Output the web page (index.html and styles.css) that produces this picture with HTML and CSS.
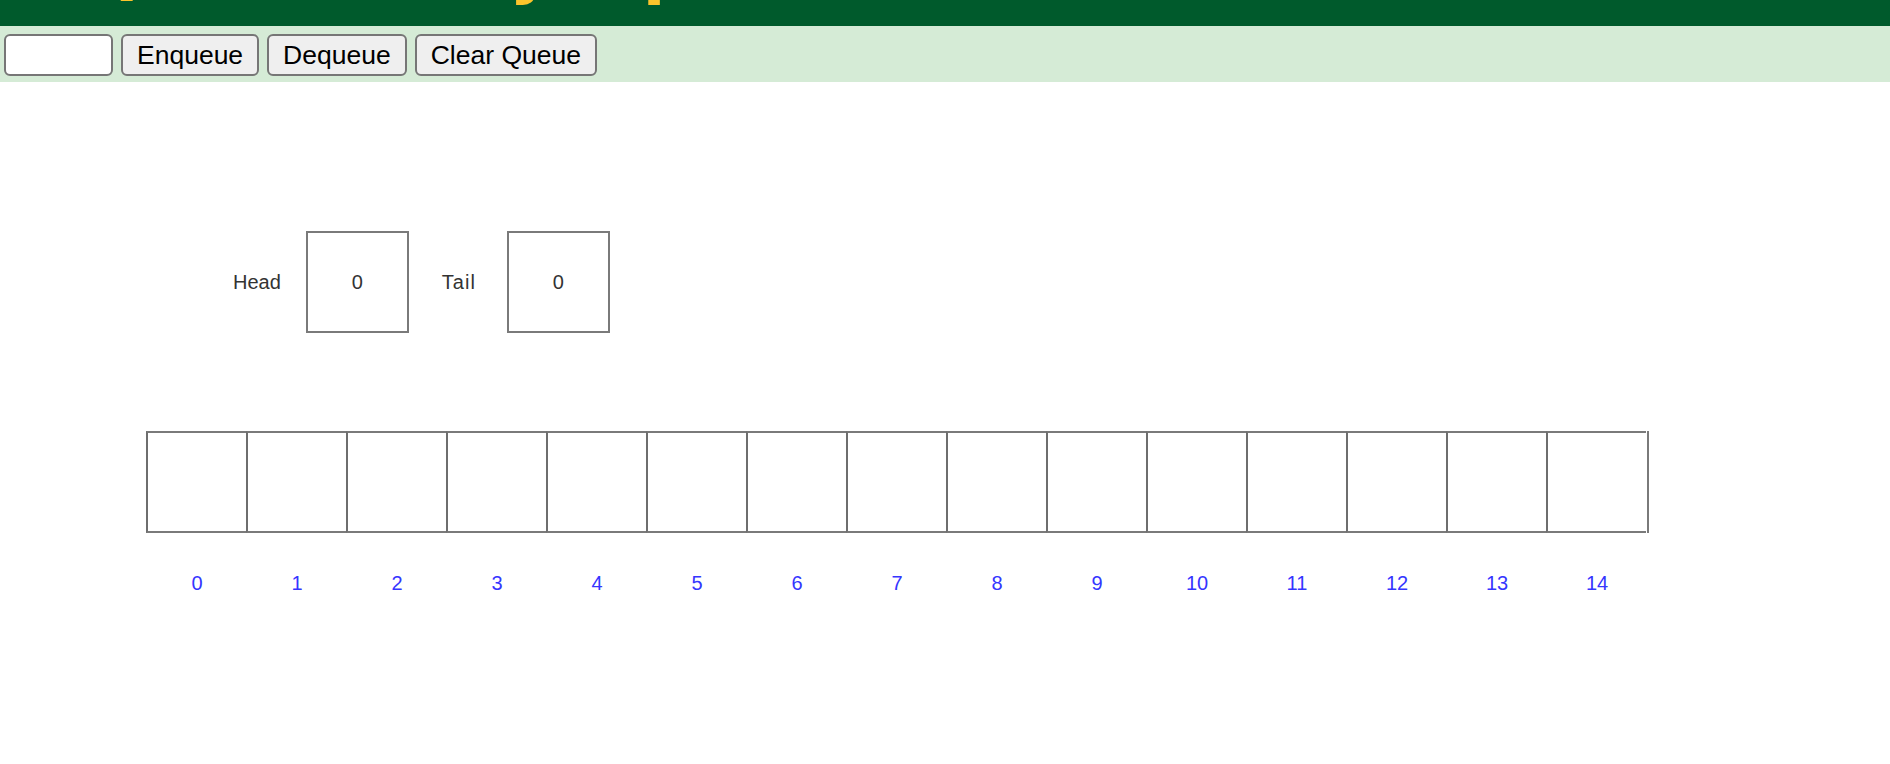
FILE: index.html
```html
<!DOCTYPE html>
<html>
<head>
<meta charset="utf-8">
<title>Queue (Array Implementation)</title>
<link rel="stylesheet" href="styles.css">
</head>
<body>
<header class="header">
  <h1 class="title">Queue (Array Implementation)</h1>
</header>
<div class="controls">
  <input class="field" type="text">
  <button class="btn">Enqueue</button>
  <button class="btn">Dequeue</button>
  <button class="btn">Clear Queue</button>
</div>
<main class="canvas">
  <div class="pointers">
    <span class="plabel head-label">Head</span>
    <div class="pbox">0</div>
    <span class="plabel tail-label">Tail</span>
    <div class="pbox">0</div>
  </div>
  <div class="array">
    <div class="cell"></div><div class="cell"></div><div class="cell"></div><div class="cell"></div><div class="cell"></div>
    <div class="cell"></div><div class="cell"></div><div class="cell"></div><div class="cell"></div><div class="cell"></div>
    <div class="cell"></div><div class="cell"></div><div class="cell"></div><div class="cell"></div><div class="cell"></div>
  </div>
  <div class="indices">
    <span class="idx">0</span><span class="idx">1</span><span class="idx">2</span><span class="idx">3</span><span class="idx">4</span>
    <span class="idx">5</span><span class="idx">6</span><span class="idx">7</span><span class="idx">8</span><span class="idx">9</span>
    <span class="idx">10</span><span class="idx">11</span><span class="idx">12</span><span class="idx">13</span><span class="idx">14</span>
  </div>
</main>
</body>
</html>
```

FILE: styles.css
```css
html, body {
  margin: 0;
  padding: 0;
  background: #ffffff;
}
body {
  width: 1890px;
  height: 764px;
  overflow: hidden;
  font-family: "Liberation Sans", Arial, sans-serif;
}
.header {
  height: 26px;
  background: #005a2c;
  overflow: hidden;
}
.title {
  margin: -64px 0 0 84px;
  font-family: "DejaVu Sans", Verdana, sans-serif;
  font-weight: bold;
  font-size: 66px;
  line-height: 66px;
  word-spacing: -26px;
  color: #fcc42c;
  white-space: nowrap;
}
.controls {
  height: 56px;
  box-sizing: border-box;
  background: #d5ebd6;
  padding: 8px 0 0 4px;
  display: flex;
  gap: 8px;
  align-items: flex-start;
}
.field {
  width: 109px;
  height: 42px;
  box-sizing: border-box;
  border: 2px solid #767676;
  border-radius: 6px;
  background: #ffffff;
  margin: 0;
  padding: 2px 4px;
  font-size: 26px;
}
.btn {
  height: 42px;
  box-sizing: border-box;
  margin: 0;
  padding: 0 14px;
  border: 2px solid #767676;
  border-radius: 6px;
  background: #efefef;
  color: #000000;
  font-family: "Liberation Sans", Arial, sans-serif;
  font-size: 26.5px;
  line-height: 36px;
}
.canvas {
  padding-top: 149px;
}
.pointers {
  display: flex;
  align-items: center;
  padding-left: 233px;
  height: 102px;
}
.plabel {
  font-size: 20px;
  color: #333333;
  line-height: 24px;
}
.head-label {
  margin-right: 25px;
}
.tail-label {
  margin-left: 33px;
  margin-right: 31px;
  letter-spacing: 1px;
}
.pbox {
  width: 103px;
  height: 102px;
  box-sizing: border-box;
  border: 2px solid #7a7a7a;
  display: flex;
  align-items: center;
  justify-content: center;
  font-size: 20px;
  color: #333333;
}
.array {
  margin-top: 98px;
  margin-left: 146px;
  display: flex;
  width: 1503px;
  height: 102px;
  box-sizing: border-box;
  border-right: 2px solid #7a7a7a;
}
.cell {
  width: 100px;
  height: 102px;
  box-sizing: border-box;
  border-top: 2px solid #7a7a7a;
  border-bottom: 2px solid #7a7a7a;
  border-left: 2px solid #6e6e6e;
  flex: none;
}
.indices {
  margin-top: 38px;
  margin-left: 147px;
  display: flex;
}
.idx {
  width: 100px;
  text-align: center;
  font-size: 20px;
  line-height: 24px;
  color: #3535ff;
}
```
